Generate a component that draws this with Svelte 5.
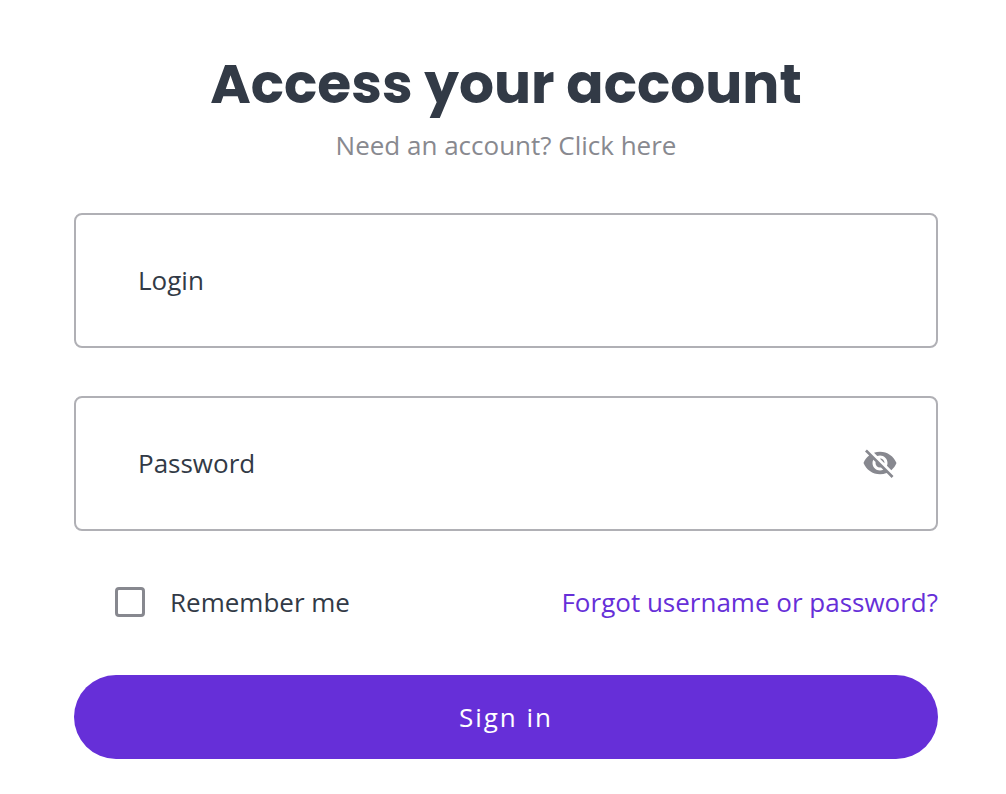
<script>
  let login = $state('');
  let password = $state('');
  let remember = $state(false);
  let visible = $state(false);
</script>

<main>
  <header>
    <h1>Access your account</h1>
    <p>Need an account? <a href="#register">Click here</a></p>
  </header>
  <form onsubmit={(e) => e.preventDefault()}>
    <div class="field">
      <input id="login" type="text" placeholder="Login" aria-label="Login" bind:value={login} />
    </div>
    <div class="field">
      <input id="password" type={visible ? 'text' : 'password'} placeholder="Password" aria-label="Password" bind:value={password} />
      <button class="eye" type="button" aria-label="Toggle password visibility" onclick={() => (visible = !visible)}>
        <svg viewBox="0 0 24 24" width="36" height="36" fill="currentColor">
          <path d="M12 7c2.76 0 5 2.24 5 5 0 .65-.13 1.26-.36 1.83l2.92 2.92c1.51-1.26 2.7-2.89 3.43-4.75-1.73-4.39-6-7.5-11-7.5-1.4 0-2.74.25-3.98.7l2.16 2.16C10.74 7.13 11.35 7 12 7zM2 4.27l2.28 2.28.46.46C3.08 8.3 1.78 10.02 1 12c1.73 4.39 6 7.5 11 7.5 1.55 0 3.03-.3 4.38-.84l.42.42L19.73 22 21 20.73 3.27 3 2 4.27zM7.53 9.8l1.55 1.55c-.05.21-.08.43-.08.65 0 1.66 1.34 3 3 3 .22 0 .44-.03.65-.08l1.55 1.55c-.67.33-1.41.53-2.2.53-2.76 0-5-2.24-5-5 0-.79.2-1.53.53-2.2zm4.31-.78l3.15 3.15.02-.16c0-1.66-1.34-3-3-3l-.17.01z" />
        </svg>
      </button>
    </div>
    <div class="options">
      <label><input type="checkbox" bind:checked={remember} />Remember me</label>
      <a href="#recover">Forgot username or password?</a>
    </div>
    <button class="submit" type="submit">Sign in</button>
  </form>
</main>

<style>
  :global(body) { margin: 0; background: #fff; }
  main {
    padding: 48px 68px 36px 74px;
    font-family: "Open Sans", sans-serif;
    font-size: 26px;
    line-height: 36px;
    color: #323a46;
  }
  header { text-align: center; margin-bottom: 50px; }
  h1 {
    margin: 0;
    font-family: Poppins, Inter, sans-serif;
    font-size: 55px;
    font-weight: 700;
    line-height: 72px;
  }
  p { margin: 7px 0 0; color: #88898f; }
  p a { color: inherit; text-decoration: none; }
  .field {
    display: flex;
    align-items: center;
    box-sizing: border-box;
    height: 135px;
    margin-bottom: 48px;
    padding-bottom: 2px;
    border: 2px solid #b0b0b5;
    border-radius: 8px;
  }
  .field input {
    flex: 1;
    min-width: 0;
    align-self: stretch;
    padding: 0 62px;
    border: 0;
    outline: 0;
    background: none;
    font: inherit;
    color: inherit;
  }
  .field input::placeholder { color: #323a46; opacity: 1; }
  .eye {
    display: flex;
    margin-right: 38px;
    padding: 0;
    border: 0;
    background: none;
    color: #87888f;
  }
  .options {
    display: flex;
    justify-content: space-between;
    align-items: center;
    padding-left: 41px;
    margin: 53px 0 55px;
  }
  label { display: flex; align-items: center; gap: 25px; }
  label input {
    appearance: none;
    box-sizing: border-box;
    width: 30px;
    height: 30px;
    margin: 0;
    border: 3px solid #87888f;
    border-radius: 4px;
  }
  label input:checked { background: #662fd8; }
  .options a { color: #662fd8; text-decoration: none; }
  .submit {
    width: 100%;
    height: 84px;
    padding: 0;
    border: 0;
    border-radius: 42px;
    background: #662fd8;
    color: #fff;
    font: inherit;
    letter-spacing: 2px;
  }
</style>
